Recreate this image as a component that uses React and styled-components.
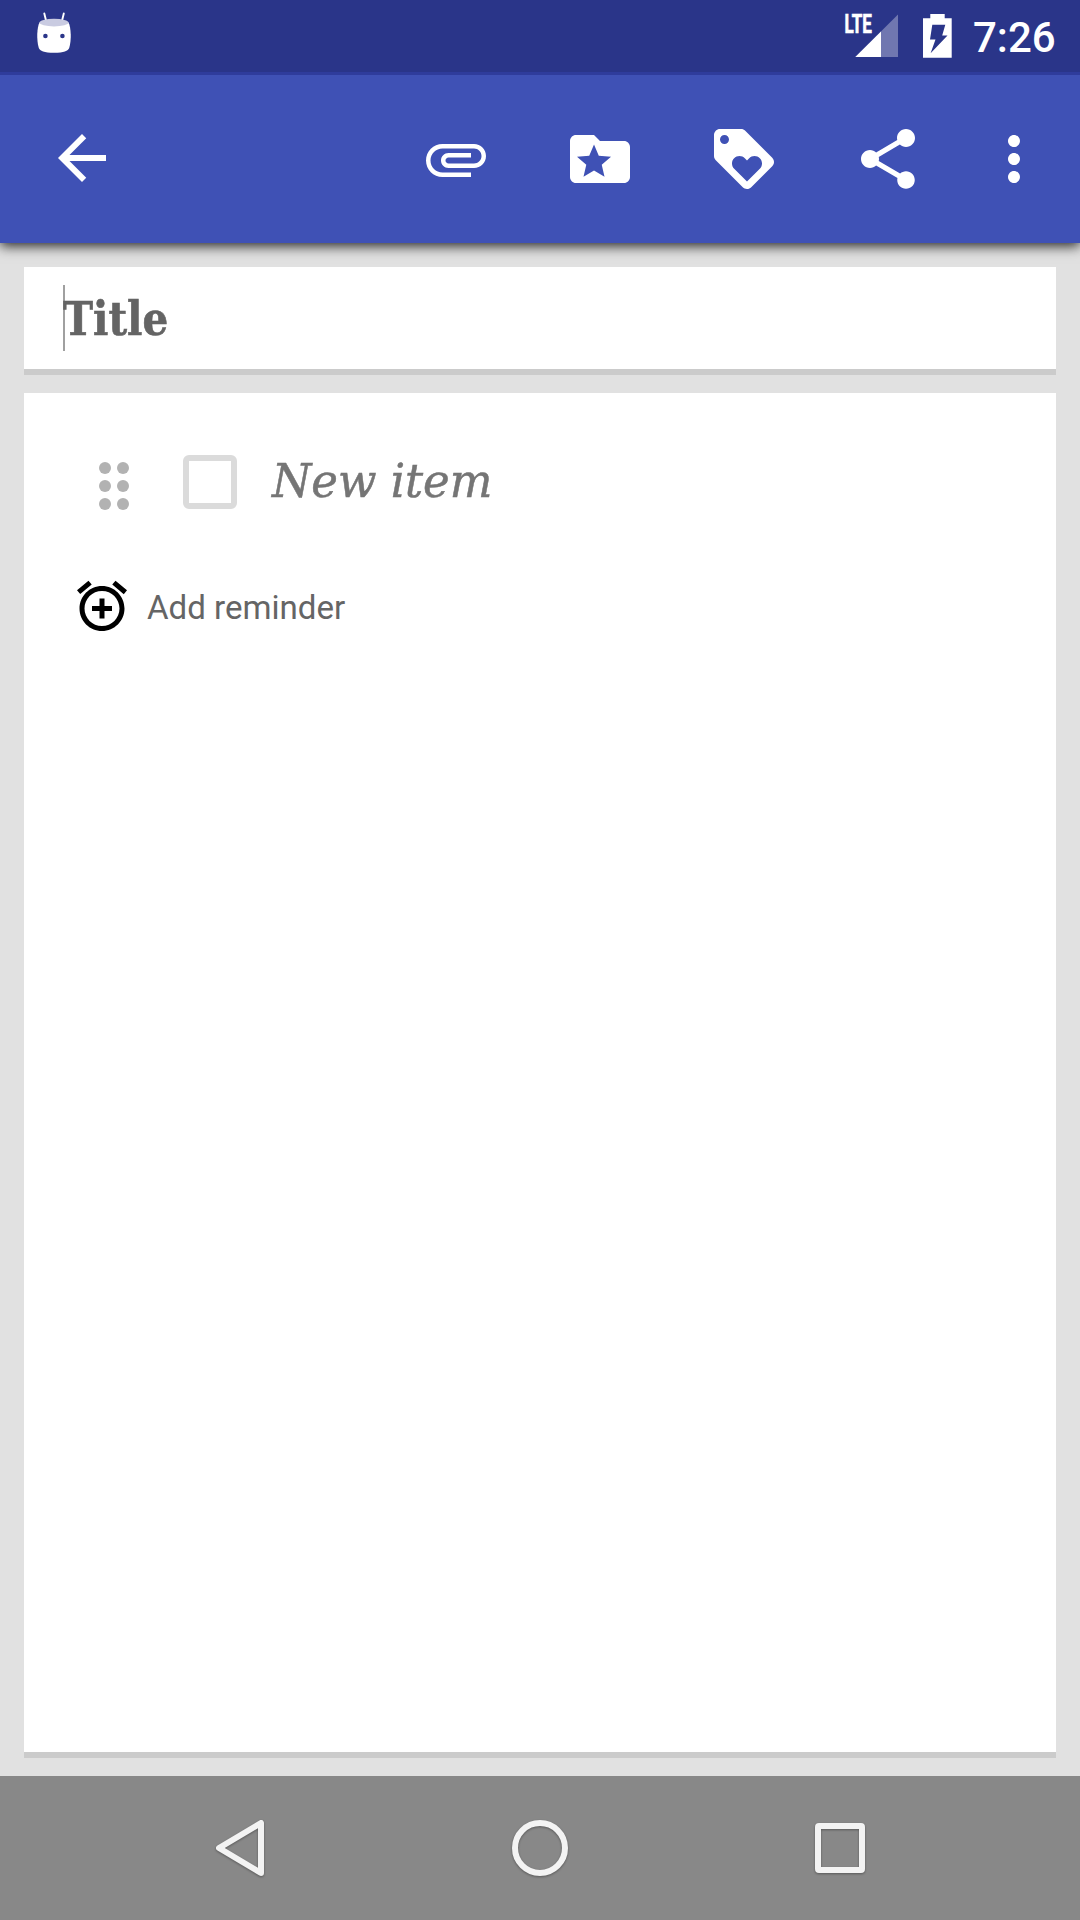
import React from "react";
import styled, { createGlobalStyle } from "styled-components";

const Global = createGlobalStyle`
  * { box-sizing: border-box; }
  html, body { margin: 0; padding: 0; }
  body { font-family: Roboto, "Noto Sans", sans-serif; background: #e1e1e1; }
`;

const Screen = styled.div`
  display: flex;
  flex-direction: column;
  width: 1080px;
  height: 1920px;
  overflow: hidden;
  background: #e1e1e1;
`;

const StatusBar = styled.header`
  position: relative;
  z-index: 1;
  display: flex;
  align-items: flex-start;
  flex: none;
  height: 75px;
  padding: 0 23px 0 36px;
  background: #2a3589;
  border-bottom: 3px solid #2f3c9c;
`;

const StatusIcons = styled.div`
  display: flex;
  margin-left: auto;
`;

const Clock = styled.time`
  width: 84px;
  margin-left: 21px;
  color: #fff;
  font-size: 42px;
  font-weight: 500;
  line-height: 76px;
  white-space: nowrap;
`;

const Toolbar = styled.nav`
  position: relative;
  display: flex;
  flex: none;
  align-items: center;
  height: 168px;
  padding: 0 30px 0 46px;
  background: #3f51b5;
  box-shadow: 0 3px 12px rgba(0, 0, 0, 0.85);
`;

const Actions = styled.div`
  display: flex;
  gap: 72px;
  margin-left: auto;
`;

const IconButton = styled.button`
  display: block;
  width: 72px;
  height: 72px;
  padding: 0;
  border: 0;
  background: none;
  color: #fff;
  margin-top: ${(p) => p.$shift || 0}px;
  margin-left: ${(p) => p.$pull || 0}px;
`;

const Glyph = styled.svg`
  display: block;
  width: 100%;
  height: 100%;
  fill: currentColor;
`;

const StatusGlyph = styled.svg`
  display: block;
  width: ${(p) => p.$w}px;
  height: 72px;
  fill: #fff;
`;

const Content = styled.main`
  display: flex;
  flex: 1;
  flex-direction: column;
  gap: 18px;
  padding: 24px 24px 18px;
`;

const Card = styled.section`
  background: #fff;
  border-bottom: 6px solid #cbcbcb;
`;

const TitleCard = styled(Card)`
  display: flex;
  align-items: flex-start;
  height: 108px;
  padding: 18px 39px;
`;

const Caret = styled.span`
  width: 2px;
  height: 66px;
  margin-right: -2px;
  background: #a0a0a0;
`;

const TitleText = styled.h1`
  margin: 0;
  color: #646464;
  font: bold 47px/68px "Roboto Slab", "DejaVu Serif Condensed", "DejaVu Serif", serif;
  -webkit-text-stroke: 0.6px #646464;
  transform: scaleX(0.955);
  transform-origin: left;
`;

const ListCard = styled(Card)`
  flex: 1;
  padding: 44px 48px;
`;

const ItemRow = styled.div`
  display: flex;
  align-items: center;
  height: 90px;
`;

const Handle = styled.div`
  display: grid;
  grid-template-columns: 12px 12px;
  gap: 6px;
  margin: 8px 0 0 27px;
`;

const Dot = styled.i`
  width: 12px;
  height: 12px;
  border-radius: 50%;
  background: #b2b2b2;
`;

const Checkbox = styled.span`
  width: 54px;
  height: 54px;
  margin-left: 54px;
  border: 6px solid #dbdbdb;
  border-radius: 6px;
`;

const ItemText = styled.span`
  margin: -2px 0 0 35px;
  color: #757575;
  font: italic 47px/60px "Roboto Slab", "DejaVu Serif Condensed", "DejaVu Serif", serif;
  -webkit-text-stroke: 0.5px #757575;
  white-space: nowrap;
  transform: scaleX(1.063);
  transform-origin: left;
`;

const Reminder = styled.div`
  display: flex;
  align-items: center;
  height: 60px;
  margin-top: 49px;
`;

const ReminderIcon = styled.span`
  width: 60px;
  height: 60px;
  color: #000;
`;

const ReminderText = styled.span`
  margin-left: 15px;
  padding-top: 4px;
  color: #656565;
  font-size: 33.1px;
  line-height: 60px;
  white-space: nowrap;
`;

const NavBar = styled.footer`
  display: flex;
  flex: none;
  justify-content: center;
  align-items: center;
  gap: 228px;
  height: 144px;
  background: #888;
`;

const NavButton = styled(IconButton)`
  filter: drop-shadow(0 1px 1px rgba(0, 0, 0, 0.35));
  svg { fill: none; stroke: #f3f3f3; stroke-width: 6; stroke-linejoin: round; }
`;

const Icon = ({ d, children }) => (
  <Glyph viewBox="0 0 24 24">
    {d && <path d={d} fillRule="evenodd" />}
    {children}
  </Glyph>
);

const paths = {
  back: "M20 11H7.83l5.59-5.59L12 4l-8 8 8 8 1.41-1.41L7.83 13H20v-2z",
  attach:
    "M7.5 18C4.46 18 2 15.54 2 12.5S4.46 7 7.5 7H18c2.21 0 4 1.79 4 4s-1.79 4-4 4H9.5C8.12 15 7 13.88 7 12.5S8.12 10 9.5 10H17v1.5H9.5c-.55 0-1 .45-1 1s.45 1 1 1H18c1.38 0 2.5-1.12 2.5-2.5S19.38 8.5 18 8.5H7.5c-2.21 0-4 1.79-4 4s1.79 4 4 4H17V18H7.5z",
  folder:
    "M20 6h-8l-2-2H4c-1.1 0-2 .9-2 2v12c0 1.1.9 2 2 2h16c1.1 0 2-.9 2-2V8c0-1.1-.9-2-2-2z",
  loyalty:
    "M21.41 11.58l-9-9C12.05 2.22 11.55 2 11 2H4c-1.1 0-2 .9-2 2v7c0 .55.22 1.05.59 1.42l9 9c.36.36.86.58 1.41.58.55 0 1.05-.22 1.41-.59l7-7c.37-.36.59-.86.59-1.41 0-.55-.23-1.06-.59-1.42zM5.5 7C4.67 7 4 6.33 4 5.5S4.67 4 5.5 4 7 4.67 7 5.5 6.33 7 5.5 7zm11.77 8.27L13 19.54l-4.27-4.27C8.28 14.81 8 14.19 8 13.5c0-1.38 1.12-2.5 2.5-2.5.69 0 1.32.28 1.77.74l.73.72.73-.73c.45-.45 1.08-.73 1.77-.73 1.38 0 2.5 1.12 2.5 2.5 0 .69-.28 1.32-.73 1.77z",
  share:
    "M18 16.08c-.76 0-1.44.3-1.96.77L8.91 12.7c.05-.23.09-.46.09-.7s-.04-.47-.09-.7l7.05-4.11c.54.5 1.25.81 2.04.81 1.66 0 3-1.34 3-3s-1.34-3-3-3-3 1.34-3 3c0 .24.04.47.09.7L8.04 9.81C7.5 9.31 6.79 9 6 9c-1.66 0-3 1.34-3 3s1.34 3 3 3c.79 0 1.5-.31 2.04-.81l7.12 4.16c-.05.21-.08.43-.08.65 0 1.61 1.31 2.92 2.92 2.92s2.92-1.31 2.92-2.92-1.31-2.92-2.92-2.92z",
  more: "M12 8c1.1 0 2-.9 2-2s-.9-2-2-2-2 .9-2 2 .9 2 2 2zm0 2c-1.1 0-2 .9-2 2s.9 2 2 2 2-.9 2-2-.9-2-2-2zm0 6c-1.1 0-2 .9-2 2s.9 2 2 2 2-.9 2-2-.9-2-2-2z",
  alarm:
    "M7.88 3.39L6.6 1.86 2 5.71l1.29 1.53 4.59-3.85zM22 5.72l-4.6-3.86-1.29 1.53 4.6 3.86L22 5.72zM12 4c-4.97 0-9 4.03-9 9s4.02 9 9 9c4.97 0 9-4.03 9-9s-4.03-9-9-9zm0 16c-3.87 0-7-3.13-7-7s3.13-7 7-7 7 3.13 7 7-3.13 7-7 7zm1-11h-2v3H8v2h3v3h2v-3h3v-2h-3V9z",
};

export default function App() {
  return (
    <Screen>
      <Global />
      <StatusBar>
        <StatusGlyph $w={36} viewBox="36 0 36 72">
          <path d="M44.3 13.5L46.4 22M63.8 13.5L61.7 22" stroke="#fff" strokeWidth="1.9" strokeLinecap="round" />
          <path d="M39.5 22.5C37 27 36.3 40 38.8 48C40 51 44 52.8 54 52.8S68 51 69.2 48C71.7 40 71 27 68.5 22.5z" />
          <ellipse cx="54" cy="22.6" rx="14.6" ry="3.8" fill="#c9cbe1" />
          <circle cx="45.4" cy="36" r="2.3" fill="#2a3589" />
          <circle cx="62.4" cy="36" r="2.3" fill="#2a3589" />
        </StatusGlyph>
        <StatusIcons>
          <StatusGlyph $w={56} viewBox="844 0 56 72">
            <text x="844.5" y="33.4" fontFamily="Roboto" fontSize="25.5" fontWeight="700" stroke="#fff" strokeWidth=".7" textLength="27.4" lengthAdjust="spacingAndGlyphs">LTE</text>
            <path d="M898 14.5V57H855.3z" opacity=".33" />
            <path d="M881 31.5V57H855.3z" />
          </StatusGlyph>
          <StatusGlyph $w={52} viewBox="900 0 52 72">
            <path fillRule="evenodd" d="M930.3 14H944.7V18.2H951.7V57.8H923V18.2H930.3zM932.3 24.7L930 39.5H935.5L930.6 53.3L947.5 35.5H942.2L945.3 24.7z" />
          </StatusGlyph>
        </StatusIcons>
        <Clock>7:26</Clock>
      </StatusBar>

      <Toolbar>
        <IconButton $shift={-2} aria-label="Back"><Icon d={paths.back} /></IconButton>
        <Actions>
          <IconButton aria-label="Attach"><Icon d={paths.attach} /></IconButton>
          <IconButton aria-label="Category">
            <Icon d={paths.folder}>
              <polygon
                fill="#3f51b5"
                transform="translate(3.2 6.02) scale(.567)"
                points="12,17.27 18.18,21 16.54,13.97 22,9.24 14.81,8.63 12,2 9.19,8.63 2,9.24 7.46,13.97 5.82,21"
              />
            </Icon>
          </IconButton>
          <IconButton aria-label="Tags"><Icon d={paths.loyalty} /></IconButton>
          <IconButton aria-label="Share"><Icon d={paths.share} /></IconButton>
          <IconButton $pull={-18} aria-label="More"><Icon d={paths.more} /></IconButton>
        </Actions>
      </Toolbar>

      <Content>
        <TitleCard>
          <Caret />
          <TitleText>Title</TitleText>
        </TitleCard>
        <ListCard>
          <ItemRow>
            <Handle>{[0, 1, 2, 3, 4, 5].map((n) => <Dot key={n} />)}</Handle>
            <Checkbox />
            <ItemText>New item</ItemText>
          </ItemRow>
          <Reminder>
            <ReminderIcon><Icon d={paths.alarm} /></ReminderIcon>
            <ReminderText>Add reminder</ReminderText>
          </Reminder>
        </ListCard>
      </Content>

      <NavBar>
        <NavButton aria-label="Back">
          <Glyph viewBox="204 1812 72 72"><path d="M261 1823V1873L219 1848z" /></Glyph>
        </NavButton>
        <NavButton aria-label="Home">
          <Glyph viewBox="504 1812 72 72"><circle cx="540" cy="1848" r="25" /></Glyph>
        </NavButton>
        <NavButton aria-label="Recents">
          <Glyph viewBox="804 1812 72 72"><rect x="818" y="1826" width="44" height="44" rx="1" /></Glyph>
        </NavButton>
      </NavBar>
    </Screen>
  );
}
